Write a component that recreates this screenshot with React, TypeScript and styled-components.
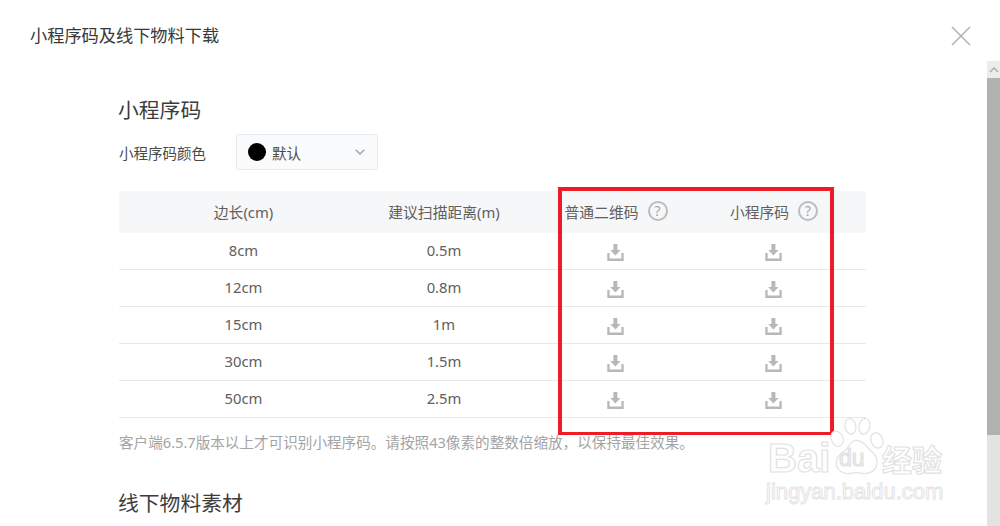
import React from "react";
import styled, { createGlobalStyle } from "styled-components";

const rows = [
  { side: "8cm", distance: "0.5m" },
  { side: "12cm", distance: "0.8m" },
  { side: "15cm", distance: "1m" },
  { side: "30cm", distance: "1.5m" },
  { side: "50cm", distance: "2.5m" },
];

const DownloadIcon = () => (
  <DownloadSvg viewBox="0 0 17 17">
    <path d="M6.4 0h4v6h3.2L8.4 11.6 3.2 6h3.2z" fill="#b8b8b8" />
    <path d="M.3 9h2.3v5.4h11.8V9h2.3v8H.3z" fill="#b8b8b8" />
  </DownloadSvg>
);

const App = () => {
  return (
    <Dialog>
      <GlobalStyle />
      <Header>
        <Title>小程序码及线下物料下载</Title>
        <CloseIcon viewBox="0 0 20 20">
          <path d="M1 1l18 18M19 1L1 19" stroke="#b4b4b4" strokeWidth="1.6" fill="none" />
        </CloseIcon>
      </Header>
      <Body>
        <Content>
          <SectionTitle>小程序码</SectionTitle>
          <ColorRow>
            <ColorLabel>小程序码颜色</ColorLabel>
            <ColorSelect>
              <ColorDot />
              <ColorName>默认</ColorName>
              <ChevronIcon viewBox="0 0 10 6">
                <path d="M.7.7L5 5 9.3.7" stroke="#a8a8a8" strokeWidth="1.6" fill="none" />
              </ChevronIcon>
            </ColorSelect>
          </ColorRow>
          <TableWrap>
            <HeadRow>
              <Cell>边长(cm)</Cell>
              <Cell>建议扫描距离(m)</Cell>
              <Cell>
                普通二维码<Help>?</Help>
              </Cell>
              <Cell>
                小程序码<Help>?</Help>
              </Cell>
            </HeadRow>
            {rows.map((row) => (
              <Row key={row.side}>
                <Cell>{row.side}</Cell>
                <Cell>{row.distance}</Cell>
                <Cell>
                  <DownloadIcon />
                </Cell>
                <Cell>
                  <DownloadIcon />
                </Cell>
              </Row>
            ))}
            <Highlight />
          </TableWrap>
          <Note>客户端6.5.7版本以上才可识别小程序码。请按照43像素的整数倍缩放，以保持最佳效果。</Note>
          <SecondTitle>线下物料素材</SecondTitle>
        </Content>
        <Scrollbar>
          <ScrollArrow>
            <svg width="10" height="6" viewBox="0 0 10 6">
              <path d="M1 5l4-4 4 4" stroke="#a8a8a8" strokeWidth="1.4" fill="none" />
            </svg>
          </ScrollArrow>
          <ScrollThumb />
        </Scrollbar>
      </Body>
      <Watermark>
        <PawIcon viewBox="0 0 70 72">
          <g fill="#fff" stroke="#e4e4e4" strokeWidth="1.6">
            <ellipse cx="27" cy="11" rx="6.5" ry="9.5" transform="rotate(-12 27 11)" />
            <ellipse cx="44" cy="11" rx="6.5" ry="9.5" transform="rotate(12 44 11)" />
            <ellipse cx="11" cy="26" rx="7" ry="9.5" transform="rotate(-22 11 26)" />
            <ellipse cx="59" cy="28" rx="7" ry="9.5" transform="rotate(-22 59 28)" />
            <path d="M34 28c8 0 12 7 17 12 5 4 9 8 8 16-1 9-10 13-17 12-5-1-10-2-15 0-8 1-17-3-17-13 0-8 6-11 11-15 4-4 6-12 13-12z" />
          </g>
        </PawIcon>
        <BrandLine>
          <BrandBai>Bai</BrandBai>
          <BrandDu>du</BrandDu>
          <BrandCn>经验</BrandCn>
        </BrandLine>
        <BrandUrl>jingyan.baidu.com</BrandUrl>
      </Watermark>
    </Dialog>
  );
};

export default App;

const GlobalStyle = createGlobalStyle`
  html, body {
    margin: 0;
    padding: 0;
    background: #fff;
    overflow: hidden;
  }
  body {
    font-family: "Noto Sans", "Noto Sans CJK SC", sans-serif;
  }
`;

const Dialog = styled.div`
  position: relative;
  width: 1000px;
  height: 526px;
  overflow: hidden;
  display: flex;
  flex-direction: column;
  background: #fff;
`;

const Header = styled.header`
  height: 61px;
  flex: none;
  display: flex;
  align-items: flex-start;
  justify-content: space-between;
  padding: 0 29px 0 30px;
`;

const Title = styled.h1`
  margin: 24px 0 0;
  font-size: 17.2px;
  line-height: 24px;
  font-weight: 400;
  color: #383838;
`;

const CloseIcon = styled.svg`
  width: 20px;
  height: 20px;
  margin-top: 26px;
`;

const Body = styled.div`
  flex: 1;
  display: flex;
  min-height: 0;
`;

const Content = styled.main`
  flex: 1;
  padding: 35px 121px 0 119px;
`;

const SectionTitle = styled.h2`
  margin: 0 0 0 -1px;
  font-size: 20.8px;
  line-height: 28px;
  font-weight: 400;
  color: #3c3c3c;
`;

const SecondTitle = styled(SectionTitle)`
  margin-top: 37px;
`;

const ColorRow = styled.div`
  display: flex;
  align-items: center;
  margin-top: 10px;
`;

const ColorLabel = styled.span`
  width: 117px;
  font-size: 14.5px;
  color: #4a4a4a;
`;

const ColorSelect = styled.div`
  box-sizing: border-box;
  width: 142px;
  height: 36px;
  display: flex;
  align-items: center;
  padding: 0 12px 0 11px;
  background: #fafbfc;
  border: 1px solid #e8ebee;
  border-radius: 3px;
`;

const ColorDot = styled.span`
  width: 18px;
  height: 18px;
  border-radius: 50%;
  background: #000;
`;

const ColorName = styled.span`
  flex: 1;
  margin-left: 6px;
  font-size: 14.5px;
  color: #4a4a4a;
`;

const ChevronIcon = styled.svg`
  width: 10px;
  height: 6px;
`;

const TableWrap = styled.div`
  position: relative;
  margin-top: 21px;
`;

const Row = styled.div`
  box-sizing: border-box;
  height: 37px;
  padding: 0 30px 2px 0;
  display: grid;
  grid-template-columns: 249px 152px 192px 124px;
  align-items: center;
  font-size: 14.8px;
  color: #606060;
  border-bottom: 1px solid #e9e9e9;
`;

const HeadRow = styled(Row)`
  height: 42px;
  background: #f6f7f9;
  border-bottom: none;
`;

const Cell = styled.div`
  display: flex;
  align-items: center;
  justify-content: center;
  white-space: nowrap;
`;

const Help = styled.span`
  box-sizing: border-box;
  width: 20px;
  height: 20px;
  margin-left: 9px;
  display: flex;
  align-items: center;
  justify-content: center;
  border: 2px solid #bcbcbc;
  border-radius: 50%;
  font-size: 14px;
  line-height: 1;
  color: #a8a8a8;
`;

const DownloadSvg = styled.svg`
  width: 17px;
  height: 17px;
  margin: 5px 1px 0 0;
`;

const Highlight = styled.div`
  position: absolute;
  box-sizing: border-box;
  left: 439px;
  top: -4px;
  width: 276px;
  height: 248px;
  border: 4px solid #ee1c25;
  border-width: 4.5px 4px 3.5px 4.5px;
`;

const Note = styled.p`
  margin: 14px 0 0;
  font-size: 14.6px;
  line-height: 20px;
  color: #a4a4a4;
  white-space: nowrap;
`;

const Scrollbar = styled.aside`
  width: 14px;
  flex: none;
  display: flex;
  flex-direction: column;
  background: #e3e3e3;
`;

const ScrollArrow = styled.div`
  height: 17px;
  display: flex;
  align-items: center;
  justify-content: center;
  background: #ececec;
`;

const ScrollThumb = styled.div`
  height: 357px;
  background: #b1b1b1;
`;

const Watermark = styled.div`
  position: absolute;
  left: 766px;
  top: 417px;
  width: 182px;
  height: 92px;
`;

const PawIcon = styled.svg`
  position: absolute;
  left: 62px;
  top: 0;
  width: 58px;
  height: 60px;
`;

const BrandLine = styled.div`
  position: absolute;
  left: 2px;
  top: 24px;
  width: 180px;
  height: 36px;
  -webkit-text-stroke: 1.2px #e2e2e2;
  color: #fff;
`;

const BrandBai = styled.span`
  position: absolute;
  left: 0;
  top: -6px;
  font-family: "Liberation Sans", sans-serif;
  font-weight: 700;
  font-size: 40px;
  line-height: 46px;
`;

const BrandDu = styled.span`
  position: absolute;
  left: 71px;
  top: 3px;
  font-family: "Liberation Sans", sans-serif;
  font-weight: 400;
  font-size: 23px;
  line-height: 28px;
  color: #f0f0f0;
`;

const BrandCn = styled.span`
  position: absolute;
  left: 114px;
  top: -3px;
  font-size: 30px;
  line-height: 40px;
  font-weight: 700;
  font-family: "Noto Sans CJK SC", sans-serif;
`;

const BrandUrl = styled.div`
  position: absolute;
  left: 0;
  top: 60px;
  font-family: "Liberation Sans", sans-serif;
  font-size: 22px;
  line-height: 30px;
  white-space: nowrap;
  color: #fff;
  -webkit-text-stroke: 1px #e4e4e4;
`;
